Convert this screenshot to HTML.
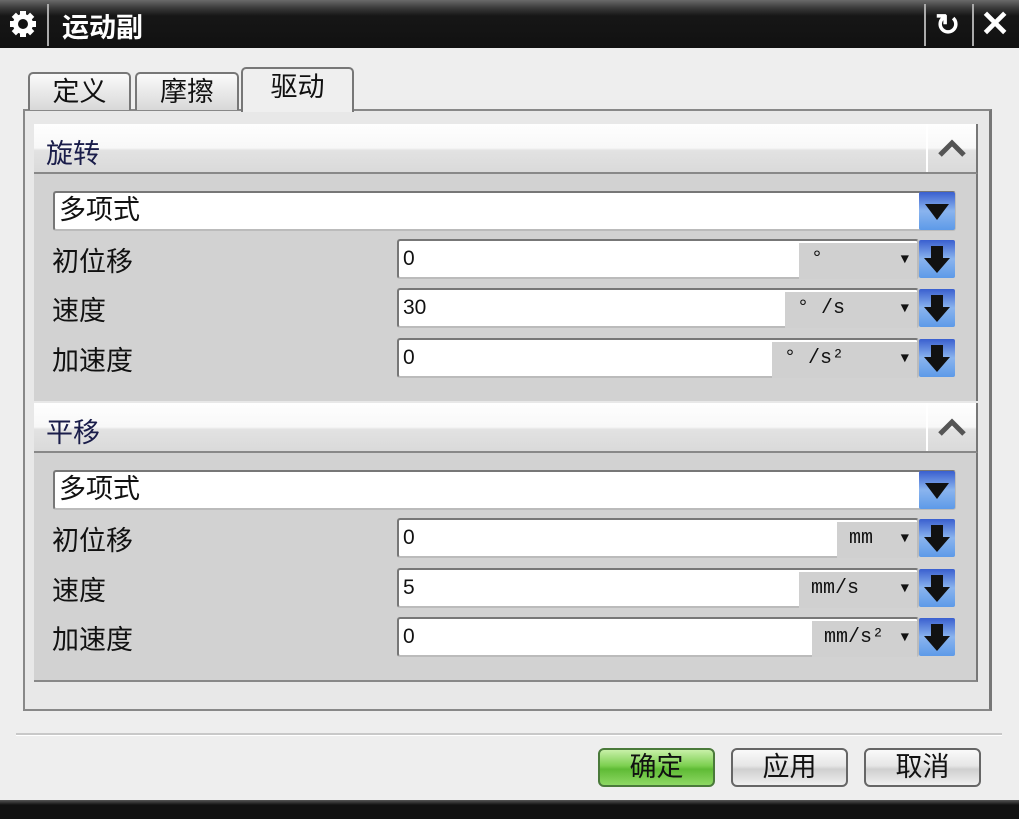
<!DOCTYPE html>
<html><head><meta charset="utf-8"><style>
*{margin:0;padding:0;box-sizing:border-box}
body{width:1019px;height:819px;background:#eeeeee;position:relative;overflow:hidden;font-family:"Liberation Sans","WenQuanYi Zen Hei","Noto Sans CJK SC",sans-serif;color:#111}
.a{position:absolute}
.title{left:0;top:0;width:1019px;height:48px;background:linear-gradient(#6a6a6a 0,#3a3a3a 8px,#161616 16px,#111 100%)}
.tt{color:#fff;font-size:27px;font-weight:bold;left:62px;top:6px}
.vs{width:2px;background:#aaa;top:4px;height:42px}
.tab{top:72px;height:38px;border:2px solid #777;border-bottom:none;border-radius:5px 5px 0 0;background:linear-gradient(#fafafa,#d8d8d8);font-size:27px;text-align:center;line-height:36px}
.panel{left:23px;top:109px;width:969px;height:602px;border:2px solid #888;border-right:3px solid #777;background:#e8e8e8}
.hdr{left:34px;width:944px;height:50px;background:linear-gradient(#fefefe 0,#f8f8f8 50%,#e2e2e2 55%,#dadada);border-bottom:2px solid #888;border-right:2px solid #777}
.hdr span{position:absolute;left:12px;top:8px;font-size:27px;color:#1a1d4a}
.hb{position:absolute;right:0;top:0;width:50px;height:48px;border-left:2px solid #fff}
.cnt{left:34px;width:944px;background:#d2d2d2;border-right:2px solid #777}
.inp{background:#fff;border:2px solid #777;border-bottom-color:#bbb;border-right-color:#bbb;border-radius:3px;height:40px;font-size:21px;padding-left:4px;line-height:36px}
.dd{font-size:27px;line-height:34px}
.btn{width:36px;height:38px;background:linear-gradient(#3a5fcf,#8ab4ee 50%,#5d9ae8);border-radius:2px}
.unit{background:#d0d0d0;height:36px;top:2px;font-family:"Liberation Mono",monospace;font-size:20px;line-height:34px}
.lbl{left:52px;font-size:27px}
.ob{top:748px;width:117px;height:39px;border:2px solid #666;border-radius:6px;font-size:27px;text-align:center;line-height:35px;background:linear-gradient(#fafafa,#e6e6e6 45%,#cfcfcf 55%,#f0f0f0)}
</style></head><body>
<div class="a title"></div>
<svg class="a" style="left:8px;top:9px" width="30" height="30" viewBox="0 0 30 30"><g fill="#fff"><circle cx="15" cy="15" r="10"/><rect x="12" y="2" width="6" height="26"/><rect x="2" y="12" width="26" height="6"/><rect x="12" y="2" width="6" height="26" transform="rotate(45 15 15)"/><rect x="12" y="2" width="6" height="26" transform="rotate(-45 15 15)"/></g><circle cx="15" cy="15" r="5" fill="#111"/></svg>
<div class="a vs" style="left:47px"></div>
<div class="a tt">运动副</div>
<div class="a vs" style="left:924px"></div>
<div class="a vs" style="left:972px"></div>
<div class="a" style="left:935px;top:8px;color:#fff;font-size:30px;font-weight:bold">↻</div>
<div class="a" style="left:980px;top:3px;color:#fff;font-size:36px;font-weight:bold">✕</div>

<div class="a panel"></div>
<div class="a tab" style="left:28px;width:103px">定义</div>
<div class="a tab" style="left:135px;width:104px">摩擦</div>
<div class="a tab" style="left:241px;top:67px;height:45px;width:113px;background:#efefef;border-bottom:none">驱动</div>

<div class="a hdr" style="top:124px"><span>旋转</span><div class="hb"><svg width="48" height="48"><path d="M12 31 L24 19 L36 31" stroke="#555" stroke-width="5" fill="none"/></svg></div></div>
<div class="a cnt" style="top:174px;height:227px"></div>
<div class="a inp dd" style="left:53px;top:191px;width:903px">多项式</div>
<div class="a btn" style="left:919px;top:192px"><svg width="36" height="38"><path d="M6 12 H30 L18 28Z" fill="#111"/></svg></div>

<div class="a lbl" style="top:240px">初位移</div>
<div class="a inp" style="left:397px;top:239px;width:522px">0<div class="a unit" style="left:400px;width:118px">&nbsp;°<span style="position:absolute;right:8px;font-size:14px">▼</span></div></div>
<div class="a btn" style="left:919px;top:240px"><svg width="36" height="38"><path d="M12 6 H24 V18 H31 L18 33 L5 18 H12Z" fill="#111"/></svg></div>
<div class="a lbl" style="top:289px">速度</div>
<div class="a inp" style="left:397px;top:288px;width:522px">30<div class="a unit" style="left:386px;width:132px">&nbsp;° /s<span style="position:absolute;right:8px;font-size:14px">▼</span></div></div>
<div class="a btn" style="left:919px;top:289px"><svg width="36" height="38"><path d="M12 6 H24 V18 H31 L18 33 L5 18 H12Z" fill="#111"/></svg></div>
<div class="a lbl" style="top:339px">加速度</div>
<div class="a inp" style="left:397px;top:338px;width:522px">0<div class="a unit" style="left:373px;width:145px">&nbsp;° /s²<span style="position:absolute;right:8px;font-size:14px">▼</span></div></div>
<div class="a btn" style="left:919px;top:339px"><svg width="36" height="38"><path d="M12 6 H24 V18 H31 L18 33 L5 18 H12Z" fill="#111"/></svg></div>

<div class="a hdr" style="top:403px"><span>平移</span><div class="hb"><svg width="48" height="48"><path d="M12 31 L24 19 L36 31" stroke="#555" stroke-width="5" fill="none"/></svg></div></div>
<div class="a cnt" style="top:453px;height:229px;border-bottom:2px solid #888"></div>
<div class="a inp dd" style="left:53px;top:470px;width:903px">多项式</div>
<div class="a btn" style="left:919px;top:471px"><svg width="36" height="38"><path d="M6 12 H30 L18 28Z" fill="#111"/></svg></div>

<div class="a lbl" style="top:519px">初位移</div>
<div class="a inp" style="left:397px;top:518px;width:522px">0<div class="a unit" style="left:438px;width:80px">&nbsp;mm<span style="position:absolute;right:8px;font-size:14px">▼</span></div></div>
<div class="a btn" style="left:919px;top:519px"><svg width="36" height="38"><path d="M12 6 H24 V18 H31 L18 33 L5 18 H12Z" fill="#111"/></svg></div>
<div class="a lbl" style="top:569px">速度</div>
<div class="a inp" style="left:397px;top:568px;width:522px">5<div class="a unit" style="left:400px;width:118px">&nbsp;mm/s<span style="position:absolute;right:8px;font-size:14px">▼</span></div></div>
<div class="a btn" style="left:919px;top:569px"><svg width="36" height="38"><path d="M12 6 H24 V18 H31 L18 33 L5 18 H12Z" fill="#111"/></svg></div>
<div class="a lbl" style="top:618px">加速度</div>
<div class="a inp" style="left:397px;top:617px;width:522px">0<div class="a unit" style="left:413px;width:105px">&nbsp;mm/s²<span style="position:absolute;right:8px;font-size:14px">▼</span></div></div>
<div class="a btn" style="left:919px;top:618px"><svg width="36" height="38"><path d="M12 6 H24 V18 H31 L18 33 L5 18 H12Z" fill="#111"/></svg></div>

<div class="a" style="left:16px;top:733px;width:986px;height:3px;background:#c8c8c8;border-bottom:1px solid #fff"></div>
<div class="a ob" style="left:598px;background:linear-gradient(#c8f0a8,#7ccf50 45%,#5fbb35 55%,#8ed864);border-color:#4a7a3a">确定</div>
<div class="a ob" style="left:731px">应用</div>
<div class="a ob" style="left:864px">取消</div>
<div class="a" style="left:0;top:800px;width:1019px;height:19px;background:linear-gradient(#555,#111 5px,#111)"></div>
</body></html>
